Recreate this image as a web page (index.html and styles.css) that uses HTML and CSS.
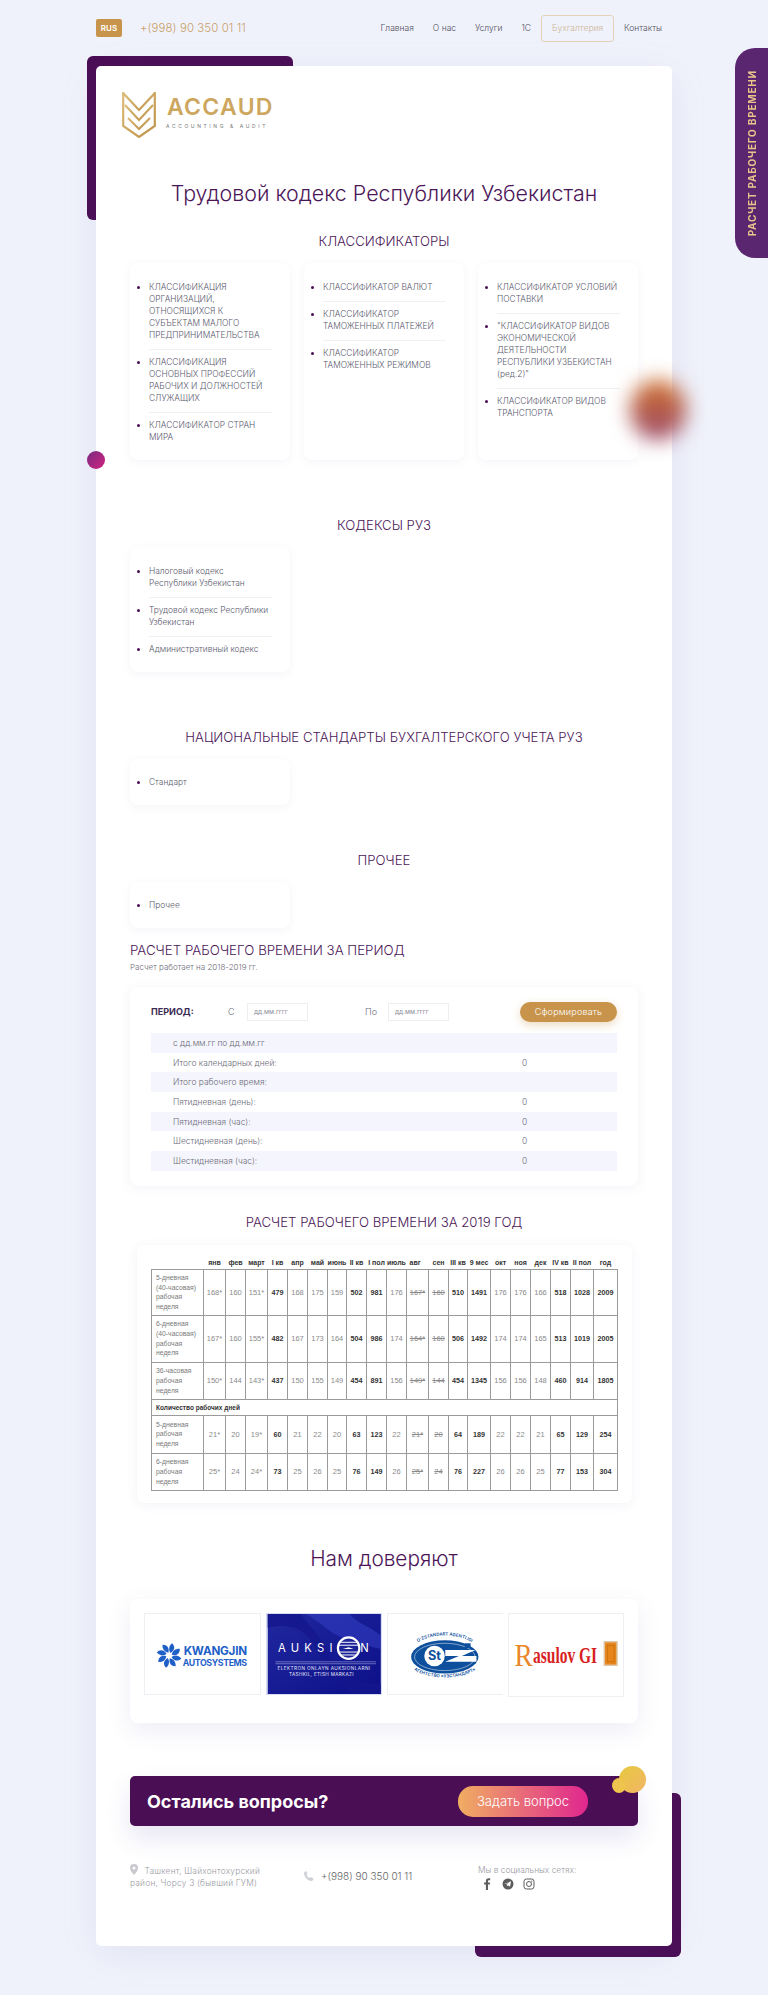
FILE: index.html
```html
<!DOCTYPE html>
<html lang="ru">
<head>
    <meta charset="UTF-8">
    <meta name="viewport" content="width=device-width, initial-scale=1.0">
    <title>Трудовой кодекс Республики Узбекистан</title>
    <link rel="stylesheet" href="styles.css">
</head>
<body>
<div class="page">
    <header class="topbar">
        <div class="topbar-left">
            <span class="lang">RUS</span>
            <a class="top-phone">+(998) 90 350 01 11</a>
        </div>
        <nav class="nav">
            <a>Главная</a>
            <a>О нас</a>
            <a>Услуги</a>
            <a>1С</a>
            <a class="nav-active">Бухгалтерия</a>
            <a>Контакты</a>
        </nav>
    </header>

    <main class="sheet">
        <div class="logo">
            <svg class="logo-mark" viewBox="0 0 34 46">
                <defs>
                    <linearGradient id="gold" x1="0" y1="0" x2="1" y2="1">
                        <stop offset="0" stop-color="#dcbc78"/>
                        <stop offset="1" stop-color="#bd9148"/>
                    </linearGradient>
                </defs>
                <g fill="none" stroke="url(#gold)" stroke-width="2.200">
                    <path d="M1.200 0v34L17 45l15.800-11V0"/>
                    <path d="M1.500 1.500L17 18 32.500 1.500"/>
                    <path d="M3 13l14 15 14-15"/>
                    <path d="M6 26l11 11 11-11"/>
                </g>
            </svg>
            <div>
                <div class="logo-name">ACCAUD</div>
                <div class="logo-sub">ACCOUNTING &amp; AUDIT</div>
            </div>
        </div>

        <h1 class="page-title">Трудовой кодекс Республики Узбекистан</h1>

        <h2 class="sec-title first">КЛАССИФИКАТОРЫ</h2>
        <div class="list-grid">
            <ul class="list-card">
                <li>КЛАССИФИКАЦИЯ ОРГАНИЗАЦИЙ, ОТНОСЯЩИХСЯ К СУБЪЕКТАМ МАЛОГО ПРЕДПРИНИМАТЕЛЬСТВА</li>
                <li>КЛАССИФИКАЦИЯ ОСНОВНЫХ ПРОФЕССИЙ РАБОЧИХ И ДОЛЖНОСТЕЙ СЛУЖАЩИХ</li>
                <li>КЛАССИФИКАТОР СТРАН МИРА</li>
            </ul>
            <ul class="list-card">
                <li>КЛАССИФИКАТОР ВАЛЮТ</li>
                <li>КЛАССИФИКАТОР ТАМОЖЕННЫХ ПЛАТЕЖЕЙ</li>
                <li>КЛАССИФИКАТОР ТАМОЖЕННЫХ РЕЖИМОВ</li>
            </ul>
            <ul class="list-card">
                <li>КЛАССИФИКАТОР УСЛОВИЙ ПОСТАВКИ</li>
                <li>"КЛАССИФИКАТОР ВИДОВ ЭКОНОМИЧЕСКОЙ ДЕЯТЕЛЬНОСТИ РЕСПУБЛИКИ УЗБЕКИСТАН (ред.2)"</li>
                <li>КЛАССИФИКАТОР ВИДОВ ТРАНСПОРТА</li>
            </ul>
        </div>

        <h2 class="sec-title">КОДЕКСЫ РУЗ</h2>
        <div class="list-grid">
            <ul class="list-card mixed">
                <li>Налоговый кодекс<br>Республики Узбекистан</li>
                <li>Трудовой кодекс Республики Узбекистан</li>
                <li>Административный кодекс</li>
            </ul>
        </div>

        <h2 class="sec-title">НАЦИОНАЛЬНЫЕ СТАНДАРТЫ БУХГАЛТЕРСКОГО УЧЕТА РУЗ</h2>
        <div class="list-grid">
            <ul class="list-card short">
                <li>Стандарт</li>
            </ul>
        </div>

        <h2 class="sec-title tight">ПРОЧЕЕ</h2>
        <div class="list-grid">
            <ul class="list-card short">
                <li>Прочее</li>
            </ul>
        </div>

        <h2 class="calc-title">РАСЧЕТ РАБОЧЕГО ВРЕМЕНИ ЗА ПЕРИОД</h2>
        <p class="calc-note">Расчет работает на 2018-2019 гг.</p>

        <section class="calc-card">
            <div class="period">
                <b class="period-label">ПЕРИОД:</b>
                <span class="period-from">С</span>
                <input class="date" type="text" placeholder="дд.мм.гггг">
                <span class="period-to">По</span>
                <input class="date" type="text" placeholder="дд.мм.гггг">
                <button class="build-btn" type="button">Сформировать</button>
            </div>
            <div class="result-row"><span>с дд.мм.гг по дд.мм.гг</span><span></span></div>
            <div class="result-row"><span>Итого календарных дней:</span><span>0</span></div>
            <div class="result-row"><span>Итого рабочего время:</span><span></span></div>
            <div class="result-row"><span>Пятидневная (день):</span><span>0</span></div>
            <div class="result-row"><span>Пятидневная (час):</span><span>0</span></div>
            <div class="result-row"><span>Шестидневная (день):</span><span>0</span></div>
            <div class="result-row"><span>Шестидневная (час):</span><span>0</span></div>
        </section>

        <h2 class="sec-title year">РАСЧЕТ РАБОЧЕГО ВРЕМЕНИ ЗА 2019 ГОД</h2>

        <section class="year-card">
            <table class="year-table">
                <colgroup>
                    <col width="52"><col width="22"><col width="20"><col width="22"><col width="20"><col width="20"><col width="20"><col width="19"><col width="20"><col width="20"><col width="20"><col width="22"><col width="20"><col width="19"><col width="23"><col width="20"><col width="20"><col width="20"><col width="20"><col width="23"><col width="24">
                </colgroup>
                <thead>
                    <tr>
                        <th class="blank"></th><th>янв</th><th>фев</th><th>март</th><th>I кв</th><th>апр</th><th>май</th><th>июнь</th><th>II кв</th><th>I пол</th><th>июль</th><th class="left">авг</th><th>сен</th><th>III кв</th><th>9 мес</th><th>окт</th><th>ноя</th><th>дек</th><th>IV кв</th><th>II пол</th><th>год</th>
                    </tr>
                </thead>
                <tbody>
                    <tr class="r47">
                        <td class="name">5-дневная (40-часовая) рабочая неделя</td>
                        <td>168*</td><td>160</td><td>151*</td><td class="sum">479</td><td>168</td><td>175</td><td>159</td><td class="sum">502</td><td class="sum">981</td><td>176</td><td><s>167*</s></td><td><s>160</s></td><td class="sum">510</td><td class="sum">1491</td><td>176</td><td>176</td><td>166</td><td class="sum">518</td><td class="sum">1028</td><td class="sum">2009</td>
                    </tr>
                    <tr class="r47">
                        <td class="name">6-дневная (40-часовая) рабочая неделя</td>
                        <td>167*</td><td>160</td><td>155*</td><td class="sum">482</td><td>167</td><td>173</td><td>164</td><td class="sum">504</td><td class="sum">986</td><td>174</td><td><s>164*</s></td><td><s>160</s></td><td class="sum">506</td><td class="sum">1492</td><td>174</td><td>174</td><td>165</td><td class="sum">513</td><td class="sum">1019</td><td class="sum">2005</td>
                    </tr>
                    <tr class="r38">
                        <td class="name">36-часовая рабочая неделя</td>
                        <td>150*</td><td>144</td><td>143*</td><td class="sum">437</td><td>150</td><td>155</td><td>149</td><td class="sum">454</td><td class="sum">891</td><td>156</td><td><s>149*</s></td><td><s>144</s></td><td class="sum">454</td><td class="sum">1345</td><td>156</td><td>156</td><td>148</td><td class="sum">460</td><td class="sum">914</td><td class="sum">1805</td>
                    </tr>
                    <tr class="r16">
                        <td class="group" colspan="21">Количество рабочих дней</td>
                    </tr>
                    <tr class="r38">
                        <td class="name">5-дневная рабочая неделя</td>
                        <td>21*</td><td>20</td><td>19*</td><td class="sum">60</td><td>21</td><td>22</td><td>20</td><td class="sum">63</td><td class="sum">123</td><td>22</td><td><s>21*</s></td><td><s>20</s></td><td class="sum">64</td><td class="sum">189</td><td>22</td><td>22</td><td>21</td><td class="sum">65</td><td class="sum">129</td><td class="sum">254</td>
                    </tr>
                    <tr class="r38">
                        <td class="name">6-дневная рабочая неделя</td>
                        <td>25*</td><td>24</td><td>24*</td><td class="sum">73</td><td>25</td><td>26</td><td>25</td><td class="sum">76</td><td class="sum">149</td><td>26</td><td><s>25*</s></td><td><s>24</s></td><td class="sum">76</td><td class="sum">227</td><td>26</td><td>26</td><td>25</td><td class="sum">77</td><td class="sum">153</td><td class="sum">304</td>
                    </tr>
                </tbody>
            </table>
        </section>

        <h2 class="trust-title">Нам доверяют</h2>

        <section class="trust-card">
            <div class="partner">
                <svg viewBox="0 0 116 82">
                    <defs>
                        <path id="blade" d="M1.500-2.500C-1-6 0-10 3-12.500c3 2.500 3.500 7-1.500 10z"/>
                    </defs>
                    <g fill="#1f5fc8" transform="translate(24 42.500)">
                        <use href="#blade"/>
                        <use href="#blade" transform="rotate(45)"/>
                        <use href="#blade" transform="rotate(90)"/>
                        <use href="#blade" transform="rotate(135)"/>
                        <use href="#blade" transform="rotate(180)"/>
                        <use href="#blade" transform="rotate(225)"/>
                        <use href="#blade" transform="rotate(270)"/>
                        <use href="#blade" transform="rotate(315)"/>
                    </g>
                    <text class="kw-big" x="39" y="42.500" textLength="65">KWANGJIN</text>
                    <text class="kw-small" x="38" y="53.500" textLength="66">AUTOSYSTEMS</text>
                </svg>
            </div>
            <div class="partner dark">
                <svg viewBox="0 0 116 82">
                    <defs>
                        <linearGradient id="auk" x1="0" y1="0" x2="1" y2="1">
                            <stop offset="0" stop-color="#20289f"/>
                            <stop offset="1" stop-color="#0c0f88"/>
                        </linearGradient>
                    </defs>
                    <rect width="116" height="82" fill="url(#auk)"/>
                    <path d="M0 0h34c10 14 18 20 28 40s26 30 54 32v10H86C68 62 56 48 46 30S18 10 0 14z" fill="#14178c" opacity=".8"/>
                    <path d="M40 0h44c8 10 20 12 32 22v14C92 30 74 26 62 16S48 6 40 0z" fill="#3440c4" opacity=".55"/>
                    <text class="auk-big" x="10.500" y="39" textLength="56">AUKSI</text>
                    <circle cx="83" cy="35" r="11" fill="#1c2399" stroke="#fff" stroke-width="2.200"/>
                    <path d="M74 29h18M73 32h20M73 39h20M75 42h16" stroke="#fff" stroke-width="1"/>
                    <path d="M77 36l6-2 5 2z" fill="#fff"/>
                    <text class="auk-big" x="95" y="39">N</text>
                    <path d="M8 49h103M8 51h103" stroke="#c0c4ee" stroke-width=".5"/>
                    <text class="auk-small" x="10" y="57.500" textLength="95">ELEKTRON ONLAYN AUKSIONLARNI</text>
                    <text class="auk-small" x="22" y="63.500" textLength="66">TASHKIL, ETISH MARKAZI</text>
                </svg>
            </div>
            <div class="partner no-right">
                <svg viewBox="0 0 116 82">
                    <defs>
                        <path id="arc-top" d="M20 44a37.500 22 0 0 1 75 0"/>
                        <path id="arc-bottom" d="M18 46a39.500 19 0 0 0 79 0"/>
                    </defs>
                    <ellipse cx="57.500" cy="44" rx="34.500" ry="17" fill="#0d4f9c"/>
                    <ellipse cx="57.500" cy="44" rx="31" ry="14" fill="none" stroke="#fff" stroke-width=".5"/>
                    <circle cx="47" cy="43" r="10.500" fill="#fff"/>
                    <text class="st-mark" x="47" y="47.500">St</text>
                    <path d="M58 37h31l-14 6h15v6H58l14-6H58z" fill="#fff"/>
                    <path d="M78 30h6v5h-6z" fill="#0d4f9c"/>
                    <text class="st-arc"><textPath href="#arc-top" startOffset="50%">O'ZSTANDART AGENTLIGI</textPath></text>
                    <text class="st-arc"><textPath href="#arc-bottom" startOffset="50%">АГЕНТСТВО «УЗСТАНДАРТ»</textPath></text>
                </svg>
            </div>
            <div class="partner tall">
                <svg viewBox="0 0 116 84">
                    <text class="ras-r" transform="translate(5 53) scale(.85 1)">R</text>
                    <text class="ras-text" transform="translate(24 50) scale(.66 1)">asulov GI</text>
                    <rect x="97" y="28.500" width="13" height="24" fill="#e8851a" stroke="#dcc4a4" stroke-width="1.500"/>
                    <rect x="100" y="32" width="7" height="17" fill="none" stroke="#b86a10" stroke-width=".6"/>
                </svg>
            </div>
        </section>

        <section class="cta">
            <h3 class="cta-title">Остались вопросы?</h3>
            <button class="cta-btn" type="button">Задать вопрос</button>
            <span class="bubble-big"></span>
            <span class="bubble-small"></span>
        </section>

        <footer class="foot">
            <div class="foot-address">
                <svg class="pin" viewBox="0 0 8 11"><path fill-rule="evenodd" d="M4 0a4 4 0 0 1 4 4c0 2.700-4 7-4 7S0 6.700 0 4a4 4 0 0 1 4-4zm0 2.500a1.500 1.500 0 1 0 0 3 1.500 1.500 0 0 0 0-3z"/></svg>
                Ташкент, Шайхонтохурский район, Чорсу 3 (бывший ГУМ)
            </div>
            <div class="foot-phone">
                <svg class="phone-icon" viewBox="0 0 10 10"><path d="M2 0l1.500 2.600-1 1.100c.6 1.500 1.700 2.600 3.200 3.200l1-1L9.400 7.500C9.400 9 8.500 10 7.500 10 3.500 9.500.5 6.500 0 2.500 0 1.500.8.400 2 0z"/></svg>
                +(998) 90 350 01 11
            </div>
            <div class="foot-social">
                <div class="social-label">Мы в социальных сетях:</div>
                <div class="social-icons">
                    <svg viewBox="0 0 10 12"><path d="M6 12V6.600h1.800L8.100 4.500H6V3.300c0-.6.200-1 1-1h1.200V.4C8 .4 7.300.3 6.600.3 5 .3 3.900 1.300 3.900 3v1.500H2.100v2.100h1.800V12z"/></svg>
                    <svg viewBox="0 0 12 12"><circle cx="6" cy="6" r="5.500"/><path d="M2.500 6l6.500-2.700-1 5.400-2-1.500-1 1-.3-1.900 3-2.300-3.800 2.100z" fill="#fff"/></svg>
                    <svg viewBox="0 0 12 12"><g fill="none" stroke="#5d5d5d" stroke-width="1"><rect x="1" y="1" width="10" height="10" rx="2.500"/><circle cx="6" cy="6" r="2.500"/></g><circle cx="8.800" cy="3.200" r=".6"/></svg>
                </div>
            </div>
        </footer>
    </main>

    <a class="side-tab"><span>Расчет рабочего времени</span></a>
    <span class="dot-pink"></span>
    <span class="blob"></span>
</div>
</body>
</html>
```

FILE: styles.css
```css
* {
    box-sizing: border-box;
}

body {
    margin: 0;
    background-color: #f0f2fb;
    color: #4a4a5a;
    font-family: Inter, "Open Sans", sans-serif;
}

.page {
    position: relative;
    z-index: 0;
    height: 1995px;
    overflow: hidden;
    padding: 0 96px;
}

/* top bar */
.topbar {
    display: flex;
    align-items: center;
    justify-content: space-between;
    height: 66px;
    padding-bottom: 10px;
}

.topbar-left {
    display: flex;
    align-items: center;
}

.lang {
    display: flex;
    align-items: center;
    justify-content: center;
    width: 26px;
    height: 18px;
    background-color: #c8944c;
    border-radius: 2px;
    color: #fff;
    font-size: 8px;
    font-weight: 600;
}

.top-phone {
    margin-left: 18px;
    color: #c8a06a;
    font-size: 11.400px;
    font-weight: 300;
    letter-spacing: 0.1px;
}

.nav {
    display: flex;
    align-items: center;
    margin-right: 10px;
    color: #4f4f5c;
    font-size: 8.500px;
    font-weight: 300;
}

.nav a {
    margin-left: 19px;
}

.nav .nav-active {
    display: flex;
    align-items: center;
    height: 27px;
    margin-left: 10px;
    margin-right: -9px;
    padding: 0 10px;
    border: 1px solid #e3d2b8;
    border-radius: 3px;
    color: #cdb596;
}

/* main white sheet */
.sheet {
    position: relative;
    height: 1880px;
    padding: 26px 34px 0;
    background-color: #fff;
    border-radius: 5px;
    box-shadow: 0 8px 40px rgba(90, 80, 170, 0.09);
}

.sheet::before,
.sheet::after {
    content: "";
    position: absolute;
    z-index: -1;
    background-color: #4a0e55;
    border-radius: 6px;
}

.sheet::before {
    left: -9px;
    top: -10px;
    width: 206px;
    height: 164px;
}

.sheet::after {
    right: -9px;
    bottom: -11px;
    width: 206px;
    height: 164px;
}

.logo {
    display: flex;
    align-items: flex-start;
    height: 46px;
    margin-left: -8px;
}

.logo-mark {
    width: 34px;
    height: 46px;
}

.logo-name {
    margin: 1px 0 0 11px;
    color: #cda75f;
    font-size: 23px;
    font-weight: 600;
    line-height: 28px;
    letter-spacing: 1.300px;
}

.logo-sub {
    margin: 1px 0 0 10px;
    color: #777;
    font-size: 5px;
    line-height: 8px;
    letter-spacing: 2.600px;
    white-space: nowrap;
}

.page-title {
    margin: 40px 0 0;
    color: #4b1658;
    font-size: 21.400px;
    font-weight: 300;
    line-height: 30px;
    text-align: center;
}

.sec-title {
    margin: 56px 0 13px;
    color: #4b1658;
    font-size: 13.200px;
    font-weight: 300;
    line-height: 18px;
    text-align: center;
}

.sec-title.first {
    margin-top: 24px;
}

.sec-title.tight {
    margin-top: 46px;
}

.sec-title.year {
    margin: 27px 0 14px;
}

/* list cards */
.list-grid {
    display: grid;
    grid-template-columns: repeat(3, 160px);
    column-gap: 14px;
}

.list-card {
    margin: 0;
    padding: 18px 18px 17px 19px;
    list-style: disc;
    background-color: #fff;
    border-radius: 8px;
    box-shadow: 0 2px 10px rgba(90, 80, 170, 0.06);
    color: #5b5a6e;
    font-size: 8.400px;
    font-weight: 300;
    line-height: 12px;
}

.list-card li {
    padding-bottom: 8px;
    margin-bottom: 6px;
    border-bottom: 1px solid #f1f1f5;
}

.list-card li:last-child {
    padding-bottom: 0;
    margin-bottom: 0;
    border-bottom: none;
}

.list-card li::marker {
    color: #4a0e55;
}

.list-card.mixed {
    padding-right: 14px;
}

.list-card.mixed li {
    margin-right: 4px;
}

.list-card.short {
    height: 46px;
    padding-top: 17px;
}

/* period calculator */
.calc-title {
    margin: 13px 0 1px;
    color: #4b1658;
    font-size: 13.300px;
    font-weight: 300;
    line-height: 18px;
}

.calc-note {
    margin: 0 0 13px;
    color: #6b6b78;
    font-size: 8px;
    font-weight: 300;
    line-height: 14px;
}

.calc-card {
    height: 199px;
    padding: 15px 21px;
    border-radius: 8px;
    box-shadow: 0 2px 12px rgba(90, 80, 170, 0.07);
}

.period {
    display: flex;
    align-items: center;
    height: 19px;
    margin-bottom: 12px;
    color: #6b6b78;
    font-size: 9px;
}

.period-label {
    width: 77px;
    color: #3c2b55;
    font-size: 9px;
}

.period-from {
    width: 19px;
    font-weight: 300;
}

.period-to {
    width: 23px;
    margin-left: 57px;
    font-weight: 300;
}

.date {
    width: 61px;
    height: 18px;
    padding: 0 6px;
    border: 1px solid #eeeef2;
    color: #777;
    font-family: inherit;
    font-size: 6.500px;
}

.date::placeholder {
    color: #8d8d98;
}

.build-btn {
    width: 97px;
    height: 20px;
    margin-left: auto;
    background-color: #c8944c;
    border: none;
    border-radius: 10px;
    box-shadow: 0 3px 8px rgba(200, 148, 76, 0.35);
    color: #fff;
    font-family: inherit;
    font-size: 9px;
    font-weight: 300;
    letter-spacing: 0.2px;
}

.result-row {
    display: grid;
    grid-template-columns: 349px 1fr;
    align-items: center;
    height: 19.700px;
    padding-left: 22px;
    color: #6b6b78;
    font-size: 8.400px;
    font-weight: 300;
}

.result-row:nth-child(even) {
    background-color: #f5f5fd;
}

/* 2019 table */
.year-card {
    height: 258px;
    margin: 0 6px 0 7px;
    padding: 12px 14px;
    border-radius: 8px;
    box-shadow: 0 2px 12px rgba(90, 80, 170, 0.07);
}

.year-table {
    width: 466px;
    table-layout: fixed;
    border-collapse: collapse;
    color: #8a8a8a;
    font-family: "Liberation Sans", Arial, sans-serif;
    font-size: 7.500px;
}

.year-table th {
    height: 12px;
    padding: 0;
    color: #333;
    font-size: 7px;
    font-weight: 700;
    text-align: center;
    white-space: nowrap;
}

.year-table th.left {
    padding-left: 3px;
    text-align: left;
}

.year-table td {
    padding: 0;
    border: 1px solid #9b9b9b;
    text-align: center;
}

.year-table td.name {
    padding: 0 4px;
    color: #7a7a7a;
    font-size: 6.800px;
    line-height: 9.700px;
    text-align: left;
}

.year-table td.sum {
    color: #333;
    font-size: 7.200px;
    font-weight: 700;
}

.year-table td.group {
    padding-left: 4px;
    color: #333;
    font-size: 6.500px;
    font-weight: 700;
    text-align: left;
}

.r47 td {
    height: 46.500px;
}

.r38 td {
    height: 37.500px;
}

.r16 td {
    height: 16px;
}

/* partners */
.trust-title {
    margin: 41px 0 25px;
    color: #4b1658;
    font-size: 20.800px;
    font-weight: 300;
    line-height: 30px;
    text-align: center;
}

.trust-card {
    display: flex;
    gap: 5px;
    align-items: flex-start;
    height: 124px;
    padding: 14px;
    border-radius: 8px;
    box-shadow: 0 8px 24px rgba(90, 80, 170, 0.1);
}

.partner {
    flex: 1;
    height: 82px;
    border: 1px solid #efeff3;
    overflow: hidden;
}

.partner svg {
    display: block;
    width: 100%;
    height: 100%;
}

.partner.dark {
    border-color: #d8daf2;
}

.partner.no-right {
    border-right: none;
}

.partner.tall {
    height: 84px;
}

.kw-big {
    fill: #1f5fc8;
    font-size: 12px;
    font-weight: 700;
}

.kw-small {
    fill: #1f5fc8;
    font-size: 9px;
    font-weight: 700;
}

.auk-big {
    fill: #fff;
    font-size: 11.500px;
}

.auk-small {
    fill: #e6e7fa;
    font-size: 4.800px;
}

.st-mark {
    fill: #0d4f9c;
    font-size: 13px;
    font-weight: 700;
    text-anchor: middle;
}

.st-arc {
    fill: #0d4f9c;
    font-size: 4.500px;
    font-weight: 600;
    text-anchor: middle;
}

.ras-r {
    fill: #e8872a;
    font-family: "Liberation Serif", serif;
    font-size: 33px;
}

.ras-text {
    fill: #d81e1e;
    font-family: "Liberation Serif", serif;
    font-size: 24px;
    font-weight: 700;
}

/* call to action */
.cta {
    position: relative;
    display: flex;
    align-items: center;
    justify-content: space-between;
    height: 50px;
    margin-top: 53px;
    padding: 0 50px 0 17px;
    background-color: #4a0e55;
    border-radius: 5px;
    box-shadow: 0 12px 24px rgba(90, 80, 170, 0.14);
}

.cta-title {
    margin: 0;
    color: #fff;
    font-size: 18px;
    font-weight: 700;
}

.cta-btn {
    width: 130px;
    height: 31px;
    background: linear-gradient(90deg, #f0ae62, #e0268f);
    border: none;
    border-radius: 15px;
    color: #fff;
    font-family: inherit;
    font-size: 13px;
    font-weight: 300;
}

.bubble-big,
.bubble-small {
    position: absolute;
    border-radius: 50%;
    background: linear-gradient(135deg, #e6c93f, #f3b566);
}

.bubble-big {
    right: -8px;
    top: -10px;
    width: 27px;
    height: 27px;
}

.bubble-small {
    right: 12px;
    top: 2px;
    width: 14px;
    height: 15px;
    background: #eec34e;
}

/* footer */
.foot {
    display: flex;
    margin-top: 38px;
    color: #9b9ba3;
    font-size: 8.400px;
    font-weight: 300;
    line-height: 12px;
}

.foot-address {
    width: 150px;
    letter-spacing: 0.2px;
}

.pin {
    width: 8px;
    height: 11px;
    margin-right: 4px;
    fill: #c9c9cf;
    vertical-align: -1px;
}

.foot-phone {
    display: flex;
    align-items: center;
    width: 174px;
    height: 24px;
    margin-left: 24px;
    color: #666;
    font-size: 10px;
}

.phone-icon {
    width: 10px;
    height: 10px;
    margin-right: 7px;
    fill: #cfd0d6;
}

.social-label {
    white-space: nowrap;
}

.social-icons {
    display: flex;
    align-items: center;
    gap: 9px;
    margin: 2px 0 0 3px;
}

.social-icons svg {
    width: 12px;
    height: 12px;
    fill: #5d5d5d;
}

/* things over the page */
.side-tab {
    position: absolute;
    right: 0;
    top: 48px;
    display: flex;
    align-items: center;
    justify-content: center;
    width: 33px;
    height: 210px;
    background-color: #5a2670;
    border-radius: 20px 0 0 20px;
    color: #e8c48a;
    font-size: 10px;
    font-weight: 700;
    letter-spacing: 0.8px;
    text-transform: uppercase;
}

.side-tab span {
    writing-mode: vertical-rl;
    transform: rotate(180deg);
    white-space: nowrap;
}

.dot-pink {
    position: absolute;
    left: 87px;
    top: 451px;
    width: 18px;
    height: 18px;
    border-radius: 50%;
    background: linear-gradient(135deg, #7a2a82, #d0247f);
}

.blob {
    position: absolute;
    left: 630px;
    top: 380px;
    width: 56px;
    height: 60px;
    border-radius: 50%;
    background: linear-gradient(180deg, #d0702a, #9a4a6e);
    filter: blur(10px);
}
```
